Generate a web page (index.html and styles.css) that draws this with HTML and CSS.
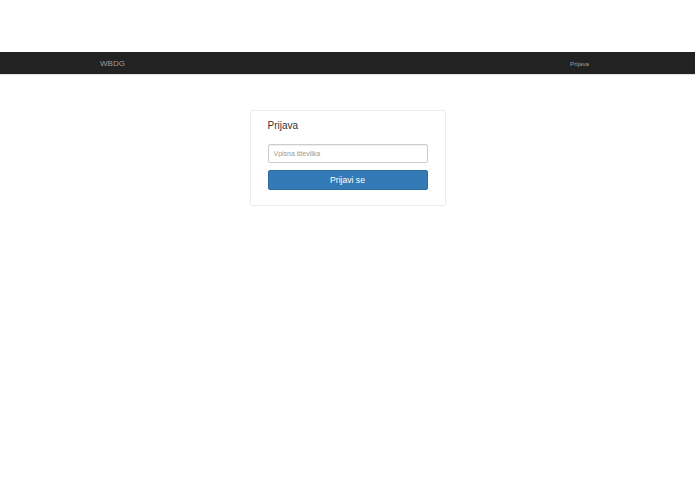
FILE: index.html
```html
<!DOCTYPE html>
<html lang="sl">
<head>
    <meta charset="UTF-8">
    <title>Prijava</title>
    <link rel="stylesheet" href="styles.css">
</head>
<body>
<div class="top-space"></div>
<nav class="navbar">
    <div class="container nav-inner">
        <a class="brand" href="#">WBDG</a>
        <a class="nav-link" href="#">Prijava</a>
    </div>
</nav>
<div class="container">
    <div class="login-card">
        <h3 class="login-title">Prijava</h3>
        <form class="login-form">
            <input class="field" type="text" placeholder="Vpisna številka">
            <button class="btn-primary" type="submit">Prijavi se</button>
        </form>
    </div>
</div>
</body>
</html>
```

FILE: styles.css
```css
* {
    margin: 0;
    padding: 0;
    box-sizing: border-box;
}

body {
    font-family: "Liberation Sans", Arial, sans-serif;
    color: #333;
    background: #fff;
}

a {
    text-decoration: none;
}

.top-space {
    height: 52px;
}

.container {
    width: 495px;
    margin: 0 auto;
}

.navbar {
    height: 23px;
    background: #222;
    border-bottom: 1px solid #e3e3e3;
}

.nav-inner {
    height: 22px;
    display: flex;
    align-items: center;
    justify-content: space-between;
    padding-right: 6px;
}

.brand {
    font-size: 8px;
    color: #9d9d9d;
}

.nav-link {
    font-size: 6.2px;
    color: #9d9d9d;
}

.login-card {
    width: 196px;
    margin: 35px auto 0;
    border: 1px solid #ececec;
    border-radius: 2px;
    padding: 8px 17px 15px;
}

.login-title {
    font-size: 10px;
    font-weight: normal;
    line-height: 14px;
    color: #333;
    margin-bottom: 11px;
}

.login-form {
    display: flex;
    flex-direction: column;
    gap: 7px;
}

.field {
    height: 19px;
    border: 1px solid #ccc;
    border-radius: 2px;
    padding: 0 5px;
    font-family: inherit;
    font-size: 7px;
    color: #555;
    box-shadow: inset 0 1px 1px rgba(0, 0, 0, 0.07);
}

.field::placeholder {
    color: #999;
}

.btn-primary {
    height: 20px;
    background: #337ab7;
    border: 1px solid #2e6da4;
    border-radius: 2px;
    color: #fff;
    font-family: inherit;
    font-size: 8.6px;
}
```
